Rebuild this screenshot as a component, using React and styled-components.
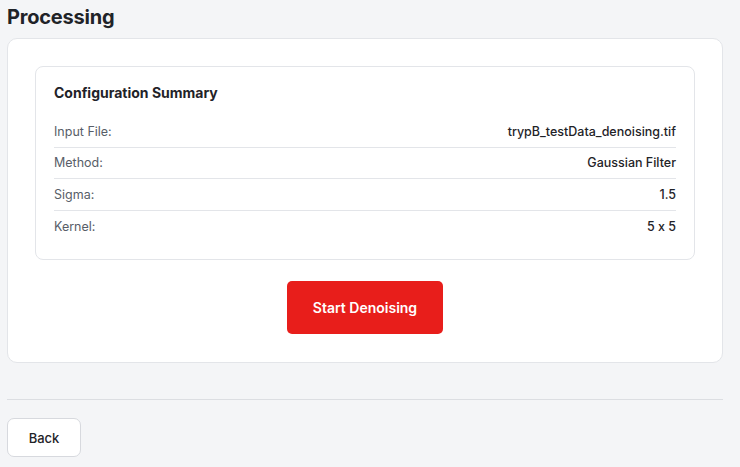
import React from "react";
import styled, { createGlobalStyle } from "styled-components";

const Global = createGlobalStyle`
  html, body { margin: 0; padding: 0; background: #f4f5f7; }
  body {
    font-family: Inter, "Noto Sans", "Liberation Sans", sans-serif;
    color: #1f2328;
    font-feature-settings: "calt" 0;
  }
  * { box-sizing: border-box; }
`;

const Page = styled.div`
  width: 716px;
  margin-left: 7px;
  display: flex;
  flex-direction: column;
`;

const Title = styled.h1`
  margin: 0;
  padding-top: 3px;
  font-size: 20px;
  line-height: 28px;
  font-weight: 700;
  color: #1f2328;
  letter-spacing: -0.2px;
`;

const Card = styled.section`
  margin-top: 7px;
  background: #fff;
  border: 1px solid #e3e5e9;
  border-radius: 10px;
  padding: 27px 27px 28px;
  display: flex;
  flex-direction: column;
  align-items: center;
`;

const Summary = styled.div`
  align-self: stretch;
  border: 1px solid #e3e5e9;
  border-radius: 8px;
  padding: 16px 18px 17px;
`;

const SummaryTitle = styled.h2`
  margin: 0 0 13px;
  font-size: 14px;
  line-height: 20px;
  font-weight: 700;
  color: #1f2328;
`;

const Row = styled.div`
  display: flex;
  justify-content: space-between;
  align-items: center;
  height: 31.5px;
  font-size: 12.5px;
  border-bottom: ${(p) => (p.$last ? "none" : "1px solid #e3e5e9")};
`;

const Label = styled.span`
  color: #585e68;
`;

const Value = styled.span`
  color: #1f2328;
  font-weight: 500;
`;

const PrimaryButton = styled.button`
  margin-top: 21px;
  width: 156px;
  height: 53px;
  border: none;
  border-radius: 5px;
  background: #e81e1b;
  color: #fff;
  font-family: inherit;
  font-size: 14px;
  font-weight: 600;
  cursor: pointer;
`;

const Divider = styled.hr`
  margin: 36px 0 0;
  border: none;
  border-top: 1px solid #dcdee2;
`;

const BackButton = styled.button`
  margin-top: 18px;
  align-self: flex-start;
  width: 74px;
  height: 39px;
  background: #fff;
  border: 1px solid #d7d9de;
  border-radius: 7px;
  font-family: inherit;
  font-size: 13px;
  font-weight: 500;
  color: #1f2328;
  cursor: pointer;
`;

const rows = [
  ["Input File:", "trypB_testData_denoising.tif"],
  ["Method:", "Gaussian Filter"],
  ["Sigma:", "1.5"],
  ["Kernel:", "5 x 5"],
];

export default function App() {
  return (
    <>
      <Global />
      <Page>
        <Title>Processing</Title>
        <Card>
          <Summary>
            <SummaryTitle>Configuration Summary</SummaryTitle>
            {rows.map(([l, v], i) => (
              <Row key={l} $last={i === rows.length - 1}>
                <Label>{l}</Label>
                <Value>{v}</Value>
              </Row>
            ))}
          </Summary>
          <PrimaryButton>Start Denoising</PrimaryButton>
        </Card>
        <Divider />
        <BackButton>Back</BackButton>
      </Page>
    </>
  );
}
